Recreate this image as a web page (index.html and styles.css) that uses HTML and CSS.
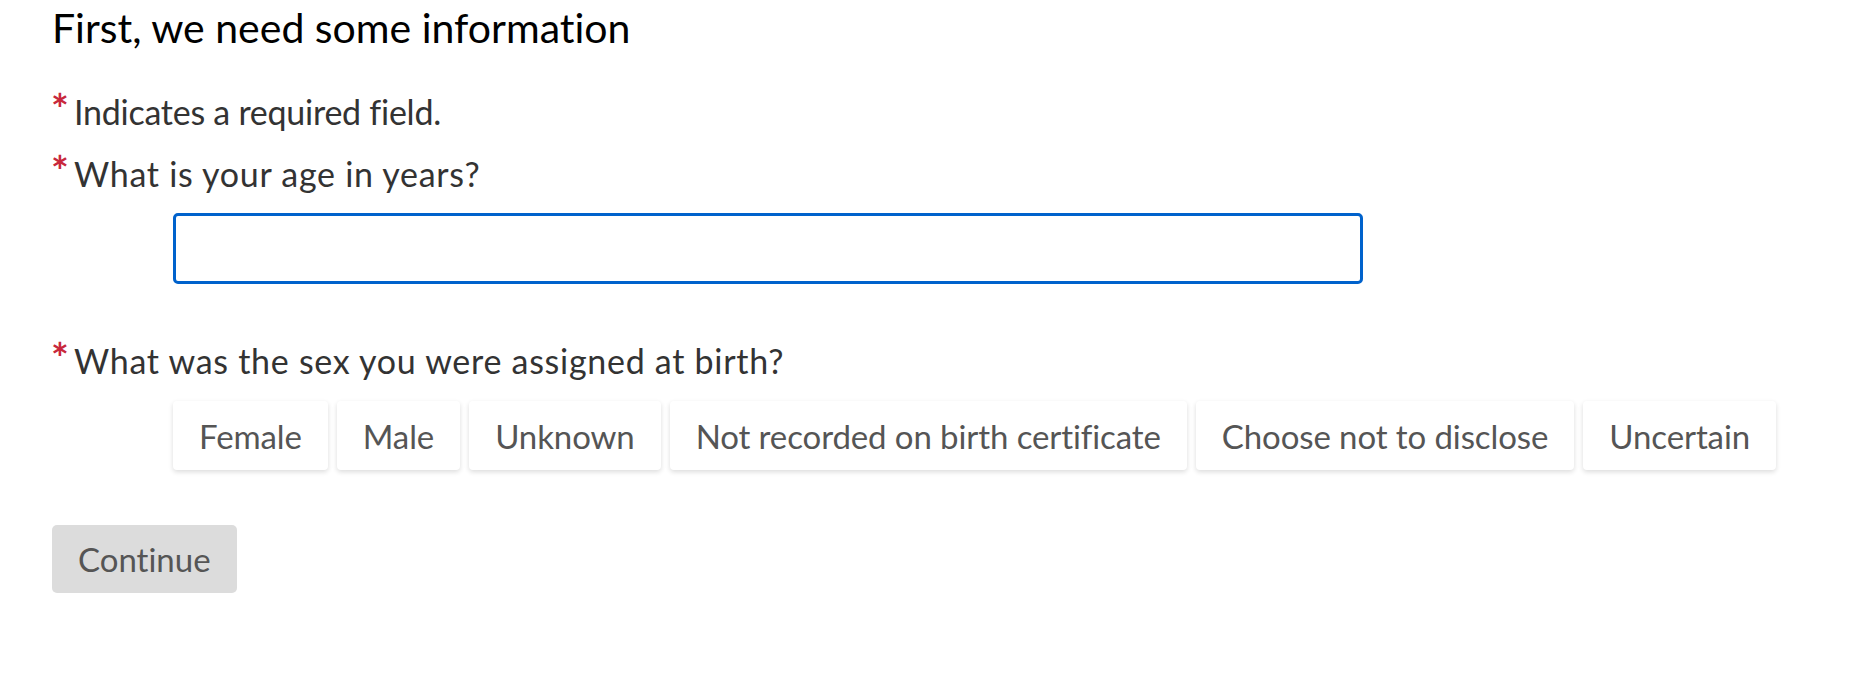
FILE: index.html
```html
<!DOCTYPE html>
<html lang="en">
<head>
<meta charset="utf-8">
<title>First, we need some information</title>
<link rel="stylesheet" href="styles.css">
</head>
<body>
<main class="page">
  <h1 class="title">First, we need some information</h1>
  <p class="note"><span class="req">*</span>Indicates a required field.</p>
  <div class="field field-age">
    <label class="label" for="age"><span class="req">*</span>What is your age in years?</label>
    <div class="control">
      <input class="text-input" id="age" type="text">
    </div>
  </div>
  <div class="field field-sex">
    <p class="label"><span class="req">*</span>What was the sex you were assigned at birth?</p>
    <div class="options">
      <button class="option" type="button">Female</button>
      <button class="option" type="button">Male</button>
      <button class="option" type="button">Unknown</button>
      <button class="option" type="button">Not recorded on birth certificate</button>
      <button class="option" type="button">Choose not to disclose</button>
      <button class="option" type="button">Uncertain</button>
    </div>
  </div>
  <button class="continue" type="button">Continue</button>
</main>
</body>
</html>
```

FILE: styles.css
```css
* { box-sizing: border-box; }

html, body {
  margin: 0;
  padding: 0;
  background: #ffffff;
}

body {
  font-family: Lato, "Open Sans", "Noto Sans", sans-serif;
  font-variant-ligatures: none;
  color: #333333;
}

.page {
  padding: 0 0 0 52px;
  display: flex;
  flex-direction: column;
  align-items: flex-start;
}

.title {
  margin: 0;
  font-size: 41px;
  line-height: 56px;
  font-weight: 400;
  color: #000000;
}

.note,
.label {
  display: block;
  margin: 0;
  font-size: 34px;
  line-height: 40px;
  color: #333333;
}

.note {
  margin-top: 36px;
  letter-spacing: -0.25px;
}

.label {
  letter-spacing: 0.72px;
}

.req {
  display: inline-block;
  width: 22px;
  color: #c8283c;
  font-size: 42px;
  font-weight: 700;
  line-height: 0;
  letter-spacing: 0;
  position: relative;
  top: 0;
  left: -1px;
}

.field {
  display: flex;
  flex-direction: column;
  align-items: flex-start;
}

.field-age {
  margin-top: 22px;
}

.control {
  margin: 19px 0 0 121px;
}

.text-input {
  display: block;
  width: 1190px;
  height: 71px;
  border: 3px solid #0062cc;
  border-radius: 5px;
  background: #ffffff;
  outline: none;
  font: inherit;
  padding: 0 12px;
}

.field-sex {
  margin-top: 57px;
}

.options {
  display: flex;
  gap: 9px;
  margin: 20px 0 0 121px;
}

.option {
  height: 69px;
  padding: 0 26px;
  border: none;
  border-radius: 4px;
  background: #ffffff;
  box-shadow: 0 2px 5px rgba(0, 0, 0, 0.14);
  font-family: inherit;
  font-size: 33px;
  font-variant-ligatures: none;
  letter-spacing: -0.1px;
  color: #555555;
  cursor: pointer;
}

.continue {
  margin-top: 55px;
  height: 68px;
  padding: 0 26px;
  border: none;
  border-radius: 5px;
  background: #dcdcdc;
  font-family: inherit;
  font-size: 33px;
  font-variant-ligatures: none;
  color: #555555;
}
```
